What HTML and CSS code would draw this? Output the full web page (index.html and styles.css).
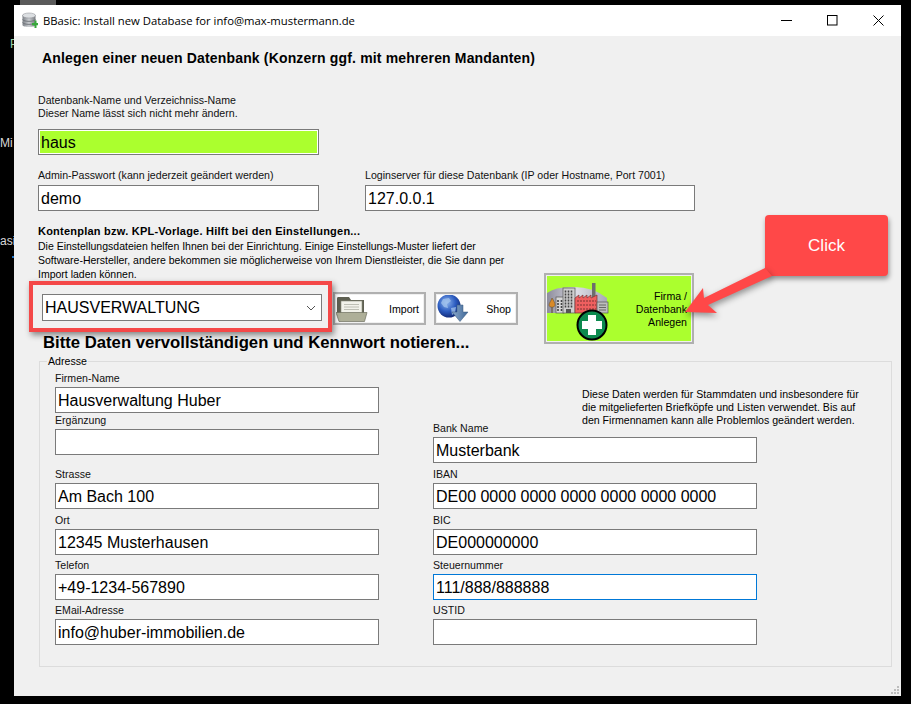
FILE: index.html
```html
<!DOCTYPE html>
<html lang="de">
<head>
<meta charset="utf-8">
<title>BBasic: Install new Database</title>
<link rel="stylesheet" href="styles.css">
</head>
<body>
<div class="desktop-tile"></div>
<span class="desktop-text desktop-p">P</span>
<span class="desktop-text desktop-mi">Mi</span>
<span class="desktop-text desktop-asi">asi</span>
<span class="desktop-dot"></span>

<div class="window">
  <header class="titlebar">
    <svg class="app-icon" width="16" height="17" viewBox="0 0 16 17">
      <defs><linearGradient id="dbg" x1="0" x2="1" y1="0" y2="0"><stop offset="0" stop-color="#7d8288"/><stop offset=".5" stop-color="#c9ccd0"/><stop offset="1" stop-color="#777b80"/></linearGradient></defs>
      <path d="M0.5 3.5C0.5 1.5 13.5 1.5 13.5 3.5V13C13.5 15.5 0.5 15.5 0.5 13Z" fill="url(#dbg)"/>
      <ellipse cx="7" cy="3.5" rx="6.5" ry="2.5" fill="#dcdfe2" stroke="#888b90" stroke-width=".5"/>
      <path d="M0.5 7.5C2 10 12 10 13.5 7.5M0.5 10.5C2 13 12 13 13.5 10.5" fill="none" stroke="#666a70" stroke-width=".8"/>
      <path d="M10 11h2.5V8.5h2V11H16v2.3h-1.500V16h-2v-2.700H10Z" fill="#38a83c"/>
    </svg>
    <span class="title-text">BBasic: Install new Database for info@max-mustermann.de</span>
    <div class="window-controls">
      <svg width="11" height="11" viewBox="0 0 11 11"><path d="M0 5.500H11" stroke="#000" stroke-width="1"/></svg>
      <svg width="11" height="11" viewBox="0 0 11 11"><rect x=".5" y=".5" width="9.500" height="9.500" fill="none" stroke="#000"/></svg>
      <svg width="11" height="11" viewBox="0 0 11 11"><path d="M.5.500L10.500 10.500M10.500.500L.5 10.500" stroke="#000" stroke-width="1" fill="none"/></svg>
    </div>
  </header>

  <main class="client">
    <h1 class="page-title">Anlegen einer neuen Datenbank (Konzern ggf. mit mehreren Mandanten)</h1>
    <p class="label db-label">Datenbank-Name und Verzeichniss-Name<br>Dieser Name lässt sich nicht mehr ändern.</p>
    <div class="box box-green box-db">haus</div>

    <div class="login-row">
      <div>
        <div class="label">Admin-Passwort (kann jederzeit geändert werden)</div>
        <div class="box box-gap">demo</div>
      </div>
      <div>
        <div class="label">Loginserver für diese Datenbank (IP oder Hostname, Port 7001)</div>
        <div class="box box-gap">127.0.0.1</div>
      </div>
    </div>

    <section class="kpl">
      <div class="kpl-main">
        <h2 class="kpl-title">Kontenplan bzw. KPL-Vorlage. Hilft bei den Einstellungen...</h2>
        <p class="kpl-text">Die Einstellungsdateien helfen Ihnen bei der Einrichtung. Einige Einstellungs-Muster liefert der<br>Software-Hersteller, andere bekommen sie möglicherweise von Ihrem Dienstleister, die Sie dann per<br>Import laden können.</p>
        <div class="tools">
          <div class="select">
            <span>HAUSVERWALTUNG</span>
            <svg width="10" height="6" viewBox="0 0 10 6"><path d="M1 1L5 5L9 1" fill="none" stroke="#555" stroke-width="1"/></svg>
          </div>
          <div class="tool-btn tool-import">
            <div class="tool-inner">
              <svg width="32" height="26" viewBox="0 0 32 26">
                <path d="M1 2.500Q1 1 2 1H13L15 4H28V20H1Z" fill="#5f6052"/>
                <rect x="5" y="5" width="21" height="13" fill="#f2f2ea" stroke="#8b8c7c" stroke-width=".6"/>
                <path d="M8 8.500H23M8 11H23M8 13.500H23" stroke="#b0b1a6" stroke-width=".8"/>
                <path d="M0 16.500H31L28.500 25.500H3Z" fill="#aeaf98" stroke="#6d6e5e" stroke-width=".7"/>
              </svg>
              <span>Import</span>
            </div>
          </div>
          <div class="tool-btn tool-shop">
            <div class="tool-inner">
              <svg width="33" height="27" viewBox="0 0 33 27">
                <defs>
                  <radialGradient id="globe" cx=".4" cy=".35" r=".7"><stop offset="0" stop-color="#8fb6ee"/><stop offset=".55" stop-color="#2c5cc0"/><stop offset="1" stop-color="#0e2470"/></radialGradient>
                  <linearGradient id="dl" x1="0" x2="1" y1="0" y2="0"><stop offset="0" stop-color="#8aa8cc"/><stop offset="1" stop-color="#3e6796"/></linearGradient>
                </defs>
                <circle cx="12" cy="11" r="11.500" fill="url(#globe)"/>
                <path d="M6 4L12 3L14 6L10 9L11 13L7 12L4 8ZM14 13L19 12L18 18L15 20Z" fill="#a5c6ee" opacity=".75"/>
                <path d="M20 10H26V17H31L23 26.500L15 17H20Z" fill="url(#dl)" stroke="#39587f" stroke-width=".5"/>
              </svg>
              <span>Shop</span>
            </div>
          </div>
        </div>
        <h2 class="data-title">Bitte Daten vervollständigen und Kennwort notieren...</h2>
      </div>

      <div class="create-btn">
        <div class="create-inner">
          <svg class="factory" width="64" height="65" viewBox="0 0 64 65">
            <defs><linearGradient id="hill" x1="0" x2="1" y1="0" y2="0"><stop offset="0" stop-color="#8d8c9c"/><stop offset=".5" stop-color="#dcdce4"/><stop offset="1" stop-color="#a9a8b8"/></linearGradient></defs>
            <path d="M0 37V17Q8 11 24 11Q45 10 60 22V37Z" fill="url(#hill)"/>
            <path d="M5 37V30" stroke="#5d4a2a" stroke-width="1"/>
            <path d="M5 22C7 25 8 27 8 29C8 32 2 32 2 29C2 27 4 25 5 22Z" fill="#d98a28" stroke="#5b4a2a" stroke-width=".5"/>
            <rect x="9" y="21" width="8" height="16" fill="#d8d8d8" stroke="#555" stroke-width=".7"/>
            <path d="M11 24v11M14.500 24v11" stroke="#444" stroke-width="1.600" stroke-dasharray="2 1"/>
            <rect x="16" y="12" width="12" height="25" fill="#cfcfcf" stroke="#555" stroke-width=".7"/>
            <path d="M18.500 14.500v18M21.500 14.500v18M24.500 14.500v18" stroke="#444" stroke-width="1.600" stroke-dasharray="2 1"/>
            <rect x="19" y="33" width="5" height="4" fill="#555"/>
            <rect x="45" y="7" width="3.500" height="15" fill="#6d6d6d"/>
            <path d="M28 37V22L32 19V22L36 19V22L40 19V22L44 19V22L50 19V37Z" fill="#ef5f5f" stroke="#7a3434" stroke-width=".7"/>
            <path d="M30 25H49M30 29H49M30 33H49" stroke="#7a3434" stroke-width="1" stroke-dasharray="2 1"/>
            <rect x="50" y="26" width="11" height="11" fill="#bdbdbd" stroke="#555" stroke-width=".7"/>
            <path d="M52 29H59M52 31.500H59M52 34H59" stroke="#666" stroke-width="1"/>
            <circle cx="45" cy="49" r="14.500" fill="#0c8a4e" stroke="#000" stroke-width="2"/>
            <path d="M41 39H49V45H55V53H49V59H41V53H35V45H41Z" fill="#fff"/>
          </svg>
          <span class="create-text">Firma /<br>Datenbank<br>Anlegen</span>
        </div>
      </div>
    </section>

    <fieldset class="address">
      <legend>Adresse</legend>
      <div class="address-grid">
        <div>
          <div class="field field-first"><div class="label">Firmen-Name</div><div class="box box-gap">Hausverwaltung Huber</div></div>
          <div class="field field-tight"><div class="label">Ergänzung</div><div class="box box-gap"></div></div>
          <div class="field field-wide"><div class="label">Strasse</div><div class="box box-gap">Am Bach 100</div></div>
          <div class="field field-mid"><div class="label">Ort</div><div class="box box-gap">12345 Musterhausen</div></div>
          <div class="field"><div class="label">Telefon</div><div class="box box-gap">+49-1234-567890</div></div>
          <div class="field"><div class="label">EMail-Adresse</div><div class="box box-gap">info@huber-immobilien.de</div></div>
        </div>
        <div>
          <p class="note">Diese Daten werden für Stammdaten und insbesondere für<br>die mitgelieferten Briefköpfe und Listen verwendet. Bis auf<br>den Firmennamen kann alle Problemlos geändert werden.</p>
          <div class="field field-first"><div class="label">Bank Name</div><div class="box box-gap">Musterbank</div></div>
          <div class="field field-mid"><div class="label">IBAN</div><div class="box box-gap">DE00 0000 0000 0000 0000 0000 0000</div></div>
          <div class="field field-mid"><div class="label">BIC</div><div class="box box-gap">DE000000000</div></div>
          <div class="field"><div class="label">Steuernummer</div><div class="box box-gap box-focus">111/888/888888</div></div>
          <div class="field"><div class="label">USTID</div><div class="box box-gap"></div></div>
        </div>
      </div>
    </fieldset>

    <svg class="grip" width="9" height="9" viewBox="0 0 9 9" fill="#bdbdbd">
      <rect x="6" y="0" width="2" height="2"/><rect x="3" y="3" width="2" height="2"/><rect x="6" y="3" width="2" height="2"/>
      <rect x="0" y="6" width="2" height="2"/><rect x="3" y="6" width="2" height="2"/><rect x="6" y="6" width="2" height="2"/>
    </svg>
  </main>
</div>

<div class="mark-box"></div>
<div class="callout">Click</div>
<svg class="callout-arrow" width="100" height="60" viewBox="680 260 100 60">
  <polygon points="685,312 703,288 704,298 765,268 772,276 708,305 717,313" fill="#ff4848"/>
</svg>
</body>
</html>
```

FILE: styles.css
```css
* { box-sizing: border-box; }

html, body { height: 100%; }

body {
  margin: 0;
  background: #000;
  overflow: hidden;
  position: relative;
  font-family: "Liberation Sans", Arial, sans-serif;
  color: #000;
}

.desktop-tile {
  position: absolute;
  left: 20px;
  top: 0;
  width: 36px;
  height: 5px;
  background: #5a5a5a;
}

.desktop-text {
  position: absolute;
  font-size: 12px;
  line-height: 14px;
  color: #d8d8d8;
}

.desktop-p { left: 10px; top: 37px; color: #9fd0a8; }
.desktop-mi { left: 0; top: 136px; }
.desktop-asi { left: 0; top: 234px; }

.desktop-dot {
  position: absolute;
  left: 12px;
  top: 256px;
  width: 2px;
  height: 2px;
  background: #1f6fc0;
}

.window {
  position: absolute;
  left: 14px;
  top: 5px;
  width: 887px;
  height: 691px;
  display: flex;
  flex-direction: column;
  background: #f0f0f0;
}

.titlebar {
  flex: none;
  height: 31px;
  background: #fff;
  display: flex;
  align-items: center;
  padding-left: 8px;
}

.app-icon { flex: none; }

.title-text {
  margin-left: 5px;
  font-family: "Open Sans", "Noto Sans", sans-serif;
  font-size: 11.300px;
  color: #000;
}

.window-controls {
  margin-left: auto;
  display: flex;
  gap: 35px;
  padding-right: 17px;
}

.client {
  flex: 1;
  position: relative;
  padding: 14px 10px 0 24px;
}

.page-title {
  margin: 0 0 0 4px;
  font-size: 14px;
  line-height: 16px;
  letter-spacing: .16px;
  font-weight: bold;
  white-space: nowrap;
}

.label {
  font-size: 10.600px;
  line-height: 13px;
  color: #111;
  white-space: nowrap;
}

.db-label { margin: 28px 0 0; }

.box {
  height: 26px;
  border: 1px solid #7a7a7a;
  background: #fff;
  font-size: 16px;
  line-height: 25px;
  padding-left: 2px;
  white-space: nowrap;
  overflow: hidden;
}

.box-db { width: 281px; margin-top: 9px; }

.box-green {
  background: #abff2e;
  box-shadow: inset 0 0 0 1px #fff;
}

.box-gap { margin-top: 3px; }

.box-focus { border-color: #0078d7; }

.login-row {
  display: grid;
  grid-template-columns: 281px 330px;
  column-gap: 46px;
  margin-top: 14px;
}

.kpl { display: flex; }

.kpl-main { width: 506px; flex: none; }

.kpl-title {
  margin: 13px 0 0;
  font-size: 11px;
  line-height: 14px;
  letter-spacing: .23px;
  font-weight: bold;
  white-space: nowrap;
}

.kpl-text {
  margin: 1px 0 0;
  font-size: 10.500px;
  line-height: 14px;
  white-space: nowrap;
}

.tools {
  display: flex;
  align-items: flex-start;
  margin-top: 11px;
}

.select {
  width: 280px;
  height: 27px;
  margin: 2px 0 0 4px;
  border: 1px solid #7a7a7a;
  background: #fff;
  font-size: 16px;
  line-height: 25px;
  padding: 0 5px 0 2px;
  display: flex;
  align-items: center;
  justify-content: space-between;
}

.tool-btn {
  height: 33px;
  border: 2px solid #b0b0b0;
  padding: 1px;
  font-size: 10.600px;
}

.tool-import { width: 93px; margin-left: 11px; }
.tool-shop { width: 84px; margin-left: 8px; }

.tool-inner {
  height: 100%;
  background: #fff;
  display: flex;
  align-items: center;
  justify-content: space-between;
  padding-right: 4px;
}

.data-title {
  margin: 9px 0 0 5px;
  font-size: 16.700px;
  line-height: 18px;
  font-weight: bold;
  white-space: nowrap;
}

.create-btn {
  width: 150px;
  height: 71px;
  margin-top: 62px;
  border: 2px solid #b0b0b0;
  padding: 1px;
  flex: none;
}

.create-inner {
  height: 100%;
  background: #abff2e;
  display: flex;
  justify-content: space-between;
  align-items: flex-start;
  padding-right: 4px;
}

.factory { flex: none; }

.create-text {
  margin-top: 14px;
  font-size: 10.600px;
  line-height: 13px;
  text-align: right;
}

.address {
  margin: 3px 0 0 1px;
  width: 853px;
  padding: 0 0 21px 15px;
  border: 1px solid #dcdcdc;
  min-width: 0;
}

.address legend {
  margin-left: -8px;
  padding: 0 1px;
  font-size: 10.600px;
  line-height: 12px;
}

.address-grid {
  display: grid;
  grid-template-columns: 324px 1fr;
  column-gap: 54px;
}

.address-grid .box { width: 324px; }
.address-grid .box-gap { margin-top: 2px; }

.field { margin-top: 4px; }
.field-first { margin-top: 5px; }
.field-tight { margin-top: 1px; }
.field-mid { margin-top: 5px; }
.field-wide { margin-top: 13px; }

.note {
  margin: 21px 0 -10px 149px;
  width: 290px;
  font-size: 10.600px;
  line-height: 13px;
  white-space: nowrap;
}

.grip {
  position: absolute;
  right: 1px;
  bottom: 1px;
}

.mark-box {
  position: absolute;
  left: 29px;
  top: 281px;
  width: 303px;
  height: 51px;
  border: 4px solid #f44848;
  box-shadow: 2px 3px 6px rgba(0, 0, 0, .45);
}

.callout {
  position: absolute;
  left: 765px;
  top: 215px;
  width: 123px;
  height: 61px;
  border-radius: 4px;
  background: #ff4848;
  color: #fff;
  font-size: 17px;
  line-height: 61px;
  text-align: center;
  box-shadow: 1px 3px 5px rgba(0, 0, 0, .4);
}

.callout-arrow {
  position: absolute;
  left: 680px;
  top: 260px;
  filter: drop-shadow(1px 3px 3px rgba(0, 0, 0, .4));
}
```
